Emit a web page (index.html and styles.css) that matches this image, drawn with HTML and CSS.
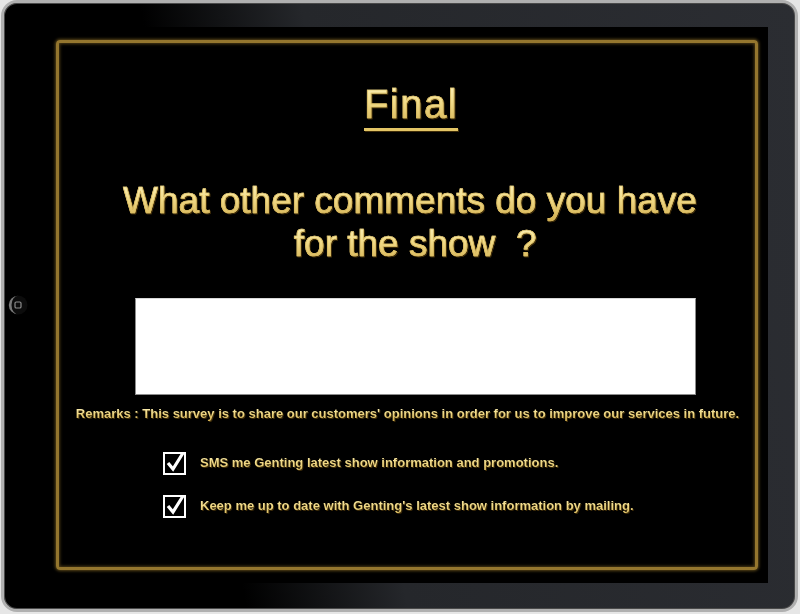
FILE: index.html
```html
<!DOCTYPE html>
<html>
<head>
<meta charset="utf-8">
<link rel="stylesheet" href="styles.css">
</head>
<body>
<div class="device">
  <div class="home">
    <svg width="20" height="20" viewBox="0 0 20 20">
      <circle cx="10" cy="10" r="9.5" fill="#0c0c0c"/>
      <path d="M10 0.8 A9.2 9.2 0 0 0 10 19.2 A6.5 9.2 0 0 1 10 0.8 Z" fill="#7a7a7a"/>
      <rect x="7" y="7" width="6" height="6" rx="1.3" fill="none" stroke="#8e8e8e" stroke-width="1.2"/>
    </svg>
  </div>
  <div class="screen">
    <div class="frame">
      <h1 class="title"><span class="gold big under">Final</span></h1>
      <p class="question"><span class="gold big">What other comments do you have<br>&nbsp;for the show&nbsp; ?</span></p>
      <div class="textbox"></div>
      <p class="remarks"><span class="gold">Remarks : This survey is to share our customers' opinions in order for us to improve our services in future.</span></p>
      <div class="options">
        <label class="option">
          <svg class="check" width="24" height="24" viewBox="0 0 24 24">
            <rect x="1" y="2" width="21" height="21" fill="none" stroke="#fff" stroke-width="2"/>
            <path d="M5 12 L10 18 L20 2" fill="none" stroke="#fff" stroke-width="3.2" stroke-linejoin="miter"/>
          </svg>
          <span class="gold">SMS me Genting latest show information and promotions.</span>
        </label>
        <label class="option">
          <svg class="check" width="24" height="24" viewBox="0 0 24 24">
            <rect x="1" y="2" width="21" height="21" fill="none" stroke="#fff" stroke-width="2"/>
            <path d="M5 12 L10 18 L20 2" fill="none" stroke="#fff" stroke-width="3.2" stroke-linejoin="miter"/>
          </svg>
          <span class="gold">Keep me up to date with Genting's latest show information by mailing.</span>
        </label>
      </div>
    </div>
  </div>
</div>
</body>
</html>
```

FILE: styles.css
```css
html, body {
  margin: 0;
  padding: 0;
  background: #e6e6e6;
  width: 800px;
  height: 614px;
  overflow: hidden;
}

.device {
  box-sizing: border-box;
  width: 797px;
  height: 612px;
  margin-left: 1px;
  border: 3px solid #b0b0b0;
  border-radius: 16px;
  background: linear-gradient(80deg, #000 0%, #000 27%, #25272b 45%, #2b2d32 100%);
  display: flex;
  align-items: center;
  padding: 24px 27px 26px 0;
  box-shadow: inset 0 0 0 1px #4a4a4a;
}

.home {
  margin-left: 4px;
  width: 20px;
  height: 20px;
  flex: none;
}
.home svg { display: block; }

.screen {
  margin-left: 17px;
  width: 723px;
  height: 556px;
  background: #000;
  flex: none;
  box-sizing: border-box;
  padding: 13px 10px 13px 11px;
}

.frame {
  box-sizing: border-box;
  height: 100%;
  border: 3px solid #94762e;
  border-radius: 4px;
  box-shadow: 0 0 3px 1px rgba(140, 110, 38, 0.65), inset 0 0 3px 1px rgba(140, 110, 38, 0.55);
  padding-top: 38px;
  font-family: "Liberation Sans", Arial, sans-serif;
}

.gold {
  background: linear-gradient(180deg, #fff6c4 0%, #f2dc8a 45%, #d2ae4e 100%);
  -webkit-background-clip: text;
  background-clip: text;
  color: transparent;
  filter: drop-shadow(1px 1px 0 rgba(70, 50, 10, 0.9));
}

.big {
  -webkit-text-stroke: 0.7px #dcbd62;
}

.title {
  margin: 0;
  text-align: center;
  font-size: 40px;
  font-weight: normal;
  line-height: 47px;
  padding-left: 8px;
}
.under {
  display: inline-block;
  letter-spacing: 1.5px;
  border-bottom: 3px solid #e3c566;
}

.question {
  margin: 48px 0 0;
  text-align: center;
  font-size: 37px;
  line-height: 43px;
  padding-left: 6px;
}

.textbox {
  margin: 33px 0 0 76px;
  width: 561px;
  height: 97px;
  box-sizing: border-box;
  background: #fff;
  border: 1px solid #8c8c8c;
  border-top-color: #d8d8d8;
}

.remarks {
  margin: 11px 0 0;
  text-align: center;
  font-size: 13px;
  font-weight: bold;
  line-height: 16px;
  padding-left: 1px;
}

.options {
  margin: 29px 0 0 104px;
  display: flex;
  flex-direction: column;
  gap: 19px;
}

.option {
  display: flex;
  align-items: center;
  gap: 13px;
  font-size: 13px;
  font-weight: bold;
  line-height: 24px;
}
.check { display: block; flex: none; }
```
